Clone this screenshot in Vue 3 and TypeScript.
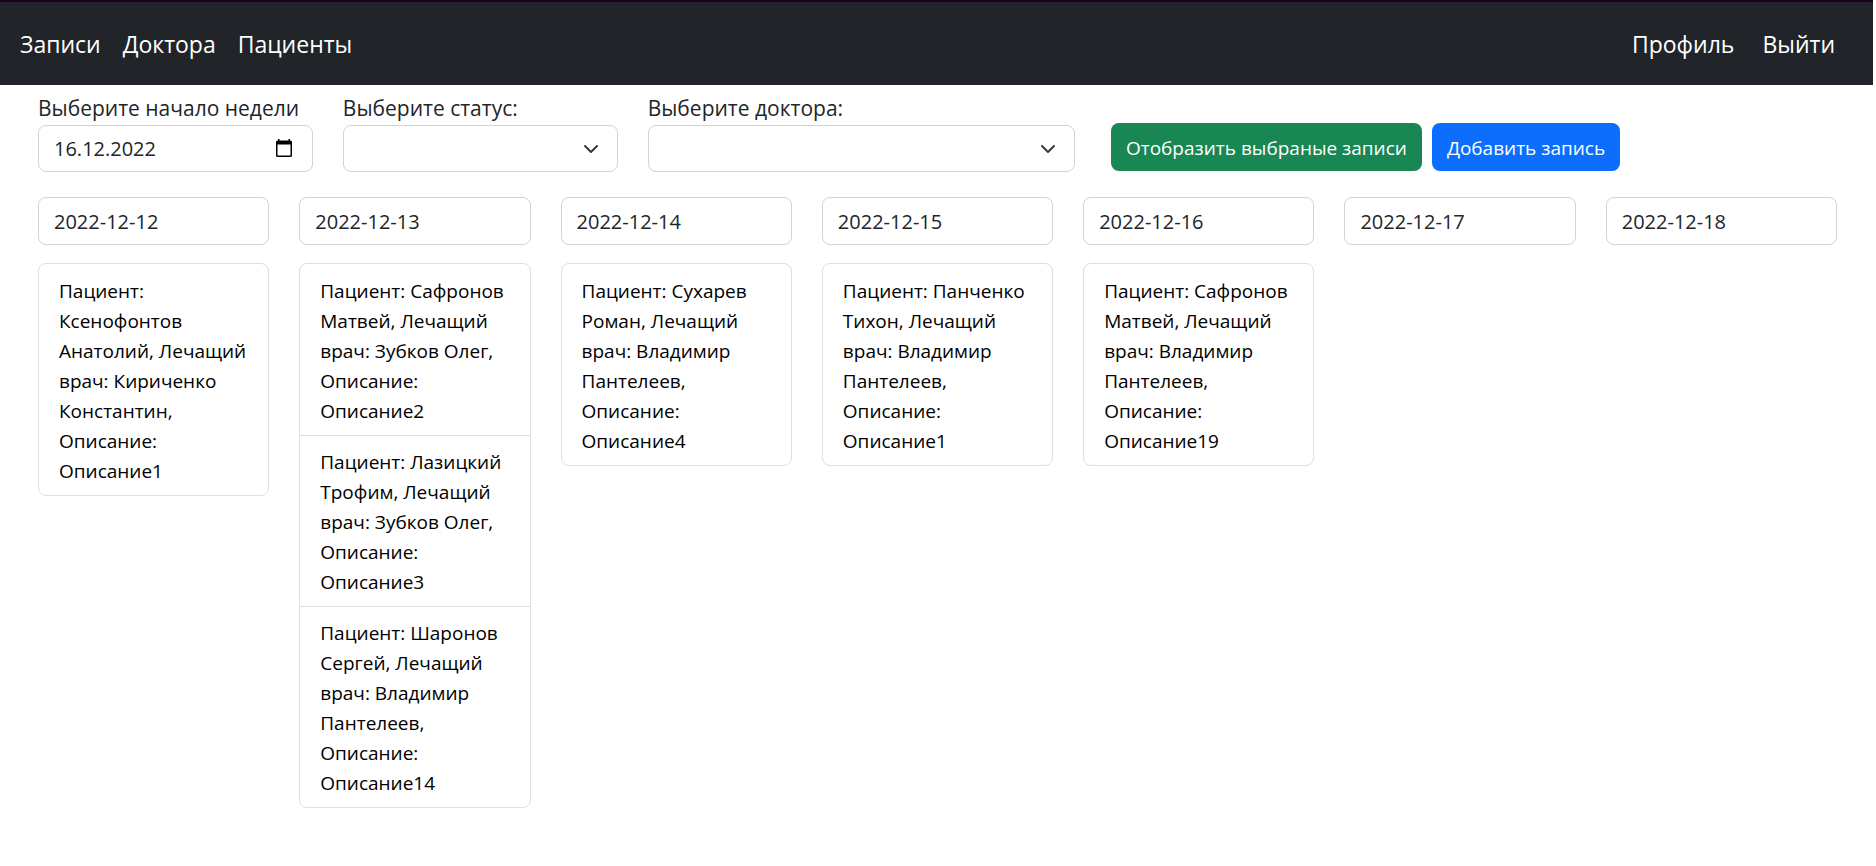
<script setup lang="ts">
import { ref } from 'vue'

interface Day {
  date: string
  records: string[]
}

const weekDate = ref('16.12.2022')
const status = ref('')
const doctor = ref('')

const days = ref<Day[]>([
  { date: '2022-12-12', records: ['Пациент: Ксенофонтов Анатолий, Лечащий врач: Кириченко Константин, Описание: Описание1'] },
  {
    date: '2022-12-13',
    records: [
      'Пациент: Сафронов Матвей, Лечащий врач: Зубков Олег, Описание: Описание2',
      'Пациент: Лазицкий Трофим, Лечащий врач: Зубков Олег, Описание: Описание3',
      'Пациент: Шаронов Сергей, Лечащий врач: Владимир Пантелеев, Описание: Описание14',
    ],
  },
  { date: '2022-12-14', records: ['Пациент: Сухарев Роман, Лечащий врач: Владимир Пантелеев, Описание: Описание4'] },
  { date: '2022-12-15', records: ['Пациент: Панченко Тихон, Лечащий врач: Владимир Пантелеев, Описание: Описание1'] },
  { date: '2022-12-16', records: ['Пациент: Сафронов Матвей, Лечащий врач: Владимир Пантелеев, Описание: Описание19'] },
  { date: '2022-12-17', records: [] },
  { date: '2022-12-18', records: [] },
])
</script>

<template>
  <div class="page">
    <header class="navbar">
      <nav class="links">
        <a href="#">Записи</a>
        <a href="#">Доктора</a>
        <a href="#">Пациенты</a>
      </nav>
      <nav class="links account">
        <a href="#">Профиль</a>
        <a href="#">Выйти</a>
      </nav>
    </header>

    <main class="content">
      <form class="filters" @submit.prevent>
        <div class="field">
          <label for="week">Выберите начало недели</label>
          <div class="control-wrap">
            <input id="week" v-model="weekDate" class="control" type="text" />
            <svg class="icon calendar" viewBox="0 0 16 18" aria-hidden="true">
              <path d="M2 0h1.5v1.5h9V0H14v1.5h.5A1.5 1.5 0 0 1 16 3v13.5a1.5 1.5 0 0 1-1.5 1.5h-13A1.5 1.5 0 0 1 0 16.5V3a1.5 1.5 0 0 1 1.5-1.5H2zM1.5 5.5v11h13v-11z" fill="#000" fill-rule="evenodd" />
            </svg>
          </div>
        </div>
        <div class="field">
          <label for="status">Выберите статус:</label>
          <div class="control-wrap">
            <select id="status" v-model="status" class="control"><option value=""></option></select>
            <svg class="icon chevron" viewBox="0 0 16 16" aria-hidden="true">
              <path d="m2 5 6 6 6-6" fill="none" stroke="#343a40" stroke-width="2" stroke-linecap="round" stroke-linejoin="round" />
            </svg>
          </div>
        </div>
        <div class="field wide">
          <label for="doctor">Выберите доктора:</label>
          <div class="control-wrap">
            <select id="doctor" v-model="doctor" class="control"><option value=""></option></select>
            <svg class="icon chevron" viewBox="0 0 16 16" aria-hidden="true">
              <path d="m2 5 6 6 6-6" fill="none" stroke="#343a40" stroke-width="2" stroke-linecap="round" stroke-linejoin="round" />
            </svg>
          </div>
        </div>
        <div class="actions">
          <button type="submit" class="btn show">Отобразить выбраные записи</button>
          <button type="button" class="btn add">Добавить запись</button>
        </div>
      </form>

      <div class="week">
        <section v-for="day in days" :key="day.date" class="day">
          <input class="control date" type="text" readonly :value="day.date" :aria-label="day.date" />
          <ul v-if="day.records.length" class="records">
            <li v-for="record in day.records" :key="record">{{ record }}</li>
          </ul>
        </section>
      </div>
    </main>
  </div>
</template>

<style>
body {
  margin: 0;
  background: #fff;
}
</style>

<style scoped>
.page,
.page * {
  box-sizing: border-box;
}
.page {
  font-family: "Open Sans", "Noto Sans", sans-serif;
  font-size: 19px;
  line-height: 30px;
  color: #212529;
}
.navbar {
  display: flex;
  justify-content: space-between;
  margin-right: 3px;
  padding: 24px 38px 23px 20px;
  border-top: 2px solid #170320;
  background: #212529;
}
.links {
  display: flex;
  gap: 22px;
}
.account {
  gap: 28px;
}
.links a {
  color: #fff;
  font-size: 23px;
  line-height: 36px;
  text-decoration: none;
}
.content {
  padding: 8px 39px 0 38px;
}
.filters {
  display: grid;
  grid-template-columns: repeat(12, minmax(0, 1fr));
  column-gap: 30px;
  align-items: end;
}
.field {
  grid-column: span 2;
}
.wide {
  grid-column: span 3;
}
.field label {
  display: block;
  margin-bottom: 2px;
  font-size: 21px;
  line-height: 30px;
  white-space: nowrap;
}
.control-wrap {
  position: relative;
}
.control {
  display: block;
  width: 100%;
  height: 47px;
  margin: 0;
  padding: 0 15px;
  border: 1px solid #ced4da;
  border-radius: 8px;
  outline: none;
  background: #fff;
  color: #212529;
  font: inherit;
  font-size: 20px;
  appearance: none;
}
.date {
  height: 48px;
}
.icon {
  position: absolute;
  pointer-events: none;
}
.calendar {
  right: 21px;
  top: 14px;
  width: 16px;
  height: 18px;
}
.chevron {
  right: 19px;
  top: 16px;
  width: 16px;
  height: 16px;
}
.actions {
  grid-column: span 5;
  display: flex;
  gap: 10px;
  padding: 0 0 1px 6px;
}
.btn {
  height: 48px;
  padding: 2px 15px 0;
  border: 0;
  border-radius: 8px;
  color: #fff;
  font: inherit;
  white-space: nowrap;
}
.show {
  background: #198754;
}
.add {
  background: #0d6efd;
}
.week {
  display: grid;
  grid-template-columns: repeat(7, minmax(0, 1fr));
  column-gap: 30px;
  align-items: start;
  margin-top: 25px;
}
.records {
  margin: 18px 0 0;
  padding: 0;
  border: 1px solid #dfdfdf;
  border-radius: 8px;
  list-style: none;
  color: #000;
}
.records li {
  padding: 12px 20px 9px;
}
.records li + li {
  padding-top: 11px;
  border-top: 1px solid #dfdfdf;
}
</style>
